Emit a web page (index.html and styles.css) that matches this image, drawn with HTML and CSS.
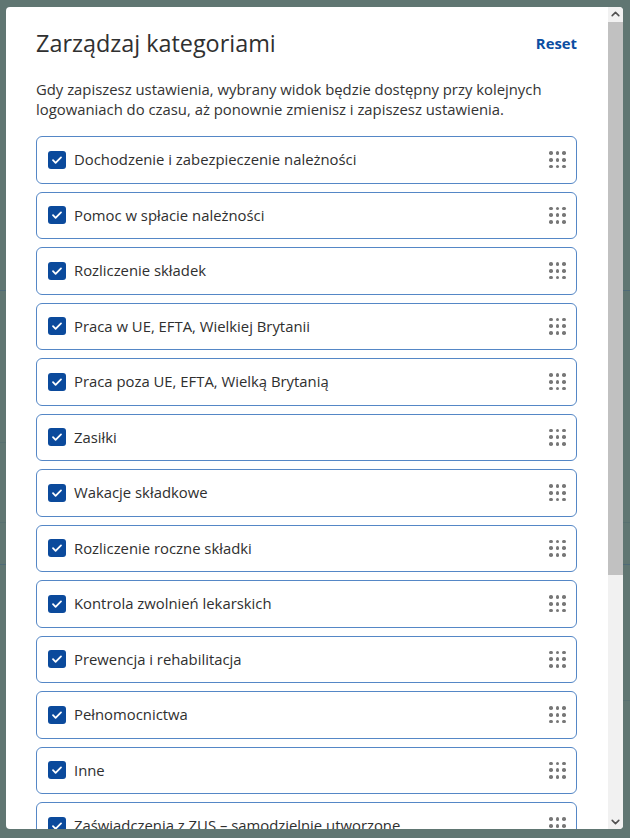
FILE: index.html
```html
<!DOCTYPE html>
<html lang="pl">
<head>
<meta charset="utf-8">
<title>Zarządzaj kategoriami</title>
<link rel="stylesheet" href="styles.css">
</head>
<body>
<div class="backdrop">
  <div class="bg-line l1"></div>
  <div class="bg-line l2"></div>
  <div class="bg-line l3"></div>
  <div class="bg-line l4"></div>
  <div class="bg-line r1"></div>
  <div class="bg-line r2"></div>
  <div class="bg-line r3"></div>
  <div class="bg-line r4"></div>
</div>
<div class="modal">
  <div class="content">
    <div class="header">
      <h1 class="title">Zarządzaj kategoriami</h1>
      <a class="reset" href="#">Reset</a>
    </div>
    <p class="desc">Gdy zapiszesz ustawienia, wybrany widok będzie dostępny przy kolejnych logowaniach do czasu, aż ponownie zmienisz i zapiszesz ustawienia.</p>
    <ul class="list">
      <li class="item"><span class="cb"><svg viewBox="0 0 18 18"><path d="M5 9.2l2.6 2.6L13 6.4"/></svg></span><span class="label">Dochodzenie i zabezpieczenie należności</span><span class="grip"><i></i><i></i><i></i><i></i><i></i><i></i><i></i><i></i><i></i></span></li>
      <li class="item"><span class="cb"><svg viewBox="0 0 18 18"><path d="M5 9.2l2.6 2.6L13 6.4"/></svg></span><span class="label">Pomoc w spłacie należności</span><span class="grip"><i></i><i></i><i></i><i></i><i></i><i></i><i></i><i></i><i></i></span></li>
      <li class="item"><span class="cb"><svg viewBox="0 0 18 18"><path d="M5 9.2l2.6 2.6L13 6.4"/></svg></span><span class="label">Rozliczenie składek</span><span class="grip"><i></i><i></i><i></i><i></i><i></i><i></i><i></i><i></i><i></i></span></li>
      <li class="item"><span class="cb"><svg viewBox="0 0 18 18"><path d="M5 9.2l2.6 2.6L13 6.4"/></svg></span><span class="label">Praca w UE, EFTA, Wielkiej Brytanii</span><span class="grip"><i></i><i></i><i></i><i></i><i></i><i></i><i></i><i></i><i></i></span></li>
      <li class="item"><span class="cb"><svg viewBox="0 0 18 18"><path d="M5 9.2l2.6 2.6L13 6.4"/></svg></span><span class="label">Praca poza UE, EFTA, Wielką Brytanią</span><span class="grip"><i></i><i></i><i></i><i></i><i></i><i></i><i></i><i></i><i></i></span></li>
      <li class="item"><span class="cb"><svg viewBox="0 0 18 18"><path d="M5 9.2l2.6 2.6L13 6.4"/></svg></span><span class="label">Zasiłki</span><span class="grip"><i></i><i></i><i></i><i></i><i></i><i></i><i></i><i></i><i></i></span></li>
      <li class="item"><span class="cb"><svg viewBox="0 0 18 18"><path d="M5 9.2l2.6 2.6L13 6.4"/></svg></span><span class="label">Wakacje składkowe</span><span class="grip"><i></i><i></i><i></i><i></i><i></i><i></i><i></i><i></i><i></i></span></li>
      <li class="item"><span class="cb"><svg viewBox="0 0 18 18"><path d="M5 9.2l2.6 2.6L13 6.4"/></svg></span><span class="label">Rozliczenie roczne składki</span><span class="grip"><i></i><i></i><i></i><i></i><i></i><i></i><i></i><i></i><i></i></span></li>
      <li class="item"><span class="cb"><svg viewBox="0 0 18 18"><path d="M5 9.2l2.6 2.6L13 6.4"/></svg></span><span class="label">Kontrola zwolnień lekarskich</span><span class="grip"><i></i><i></i><i></i><i></i><i></i><i></i><i></i><i></i><i></i></span></li>
      <li class="item"><span class="cb"><svg viewBox="0 0 18 18"><path d="M5 9.2l2.6 2.6L13 6.4"/></svg></span><span class="label">Prewencja i rehabilitacja</span><span class="grip"><i></i><i></i><i></i><i></i><i></i><i></i><i></i><i></i><i></i></span></li>
      <li class="item"><span class="cb"><svg viewBox="0 0 18 18"><path d="M5 9.2l2.6 2.6L13 6.4"/></svg></span><span class="label">Pełnomocnictwa</span><span class="grip"><i></i><i></i><i></i><i></i><i></i><i></i><i></i><i></i><i></i></span></li>
      <li class="item"><span class="cb"><svg viewBox="0 0 18 18"><path d="M5 9.2l2.6 2.6L13 6.4"/></svg></span><span class="label">Inne</span><span class="grip"><i></i><i></i><i></i><i></i><i></i><i></i><i></i><i></i><i></i></span></li>
      <li class="item"><span class="cb"><svg viewBox="0 0 18 18"><path d="M5 9.2l2.6 2.6L13 6.4"/></svg></span><span class="label">Zaświadczenia z ZUS – samodzielnie utworzone</span><span class="grip"><i></i><i></i><i></i><i></i><i></i><i></i><i></i><i></i><i></i></span></li>
    </ul>
  </div>
  <div class="scrollbar">
    <div class="sb-btn"><svg viewBox="0 0 15 15"><path d="M4.2 8.6L7.5 5.4l3.3 3.2"/></svg></div>
    <div class="sb-track"><div class="sb-thumb"></div></div>
    <div class="sb-btn"><svg viewBox="0 0 15 15"><path d="M4.2 6.4l3.3 3.2 3.3-3.2"/></svg></div>
  </div>
</div>
</body>
</html>
```

FILE: styles.css
```css
html, body {
  margin: 0;
  padding: 0;
}
body {
  width: 630px;
  height: 838px;
  overflow: hidden;
  background: #607672;
  font-family: "Open Sans", "Noto Sans", sans-serif;
  color: #333333;
  position: relative;
}
.backdrop {
  position: absolute;
  inset: 0;
}
.bg-line {
  position: absolute;
  height: 1px;
  background: #4f6b78;
}
.l1 { left: 0; width: 8px; top: 290px; }
.l2 { left: 0; width: 8px; top: 442px; background: #587070; }
.l3 { left: 0; width: 8px; top: 522px; background: #587070; }
.l4 { left: 0; width: 8px; top: 564px; }
.r1 { right: 0; width: 10px; top: 290px; }
.r2 { right: 0; width: 10px; top: 522px; background: #587070; }
.r3 { right: 0; width: 10px; top: 564px; }
.r4 { right: 0; width: 10px; top: 700px; background: #587070; }

.modal {
  position: absolute;
  left: 6px;
  top: 7px;
  width: 617px;
  height: 822px;
  background: #ffffff;
  border-radius: 4px;
  overflow: hidden;
  display: flex;
}
.content {
  flex: 1;
  min-width: 0;
  overflow: hidden;
  padding: 20px 31px 0 30px;
}
.header {
  display: flex;
  align-items: center;
  justify-content: space-between;
  height: 32px;
}
.title {
  margin: 0;
  font-size: 23.4px;
  font-weight: 400;
  line-height: 32px;
  color: #303030;
}
.reset {
  font-size: 14.85px;
  font-weight: 700;
  color: #0b4ea2;
  text-decoration: none;
  line-height: 20px;
}
.desc {
  margin: 20px 0 0;
  font-size: 14.85px;
  line-height: 20px;
  color: #333333;
}
.list {
  list-style: none;
  margin: 17px 0 0;
  padding: 0;
  display: flex;
  flex-direction: column;
  gap: 8px;
}
.item {
  display: flex;
  align-items: center;
  height: 47.5px;
  box-sizing: border-box;
  border: 1px solid #5587c6;
  border-radius: 6px;
  padding: 0 10px 0 11px;
  font-size: 14.85px;
  flex: none;
}
.cb {
  width: 18px;
  height: 18px;
  border-radius: 3px;
  background: #0b4a9c;
  flex: none;
  display: flex;
}
.cb svg {
  width: 18px;
  height: 18px;
  fill: none;
  stroke: #ffffff;
  stroke-width: 1.8;
  stroke-linecap: round;
  stroke-linejoin: round;
}
.label {
  margin-left: 8px;
  flex: 1;
  color: #2f2f2f;
  white-space: nowrap;
  line-height: 20px;
  margin-top: -1px;
}
.grip {
  display: grid;
  grid-template-columns: repeat(3, 3.6px);
  grid-auto-rows: 3.6px;
  gap: 3px;
  flex: none;
}
.grip i {
  display: block;
  width: 3.6px;
  height: 3.6px;
  border-radius: 50%;
  background: #777777;
}

.scrollbar {
  width: 15px;
  flex: none;
  display: flex;
  flex-direction: column;
  background: #f1f1f1;
}
.sb-btn {
  height: 15px;
  flex: none;
  display: flex;
}
.sb-btn svg {
  width: 15px;
  height: 15px;
  fill: none;
  stroke: #505050;
  stroke-width: 1.6;
  stroke-linecap: round;
  stroke-linejoin: round;
}
.sb-track {
  flex: 1;
  display: flex;
  flex-direction: column;
}
.sb-thumb {
  height: 553px;
  background: #c1c1c1;
}
```
